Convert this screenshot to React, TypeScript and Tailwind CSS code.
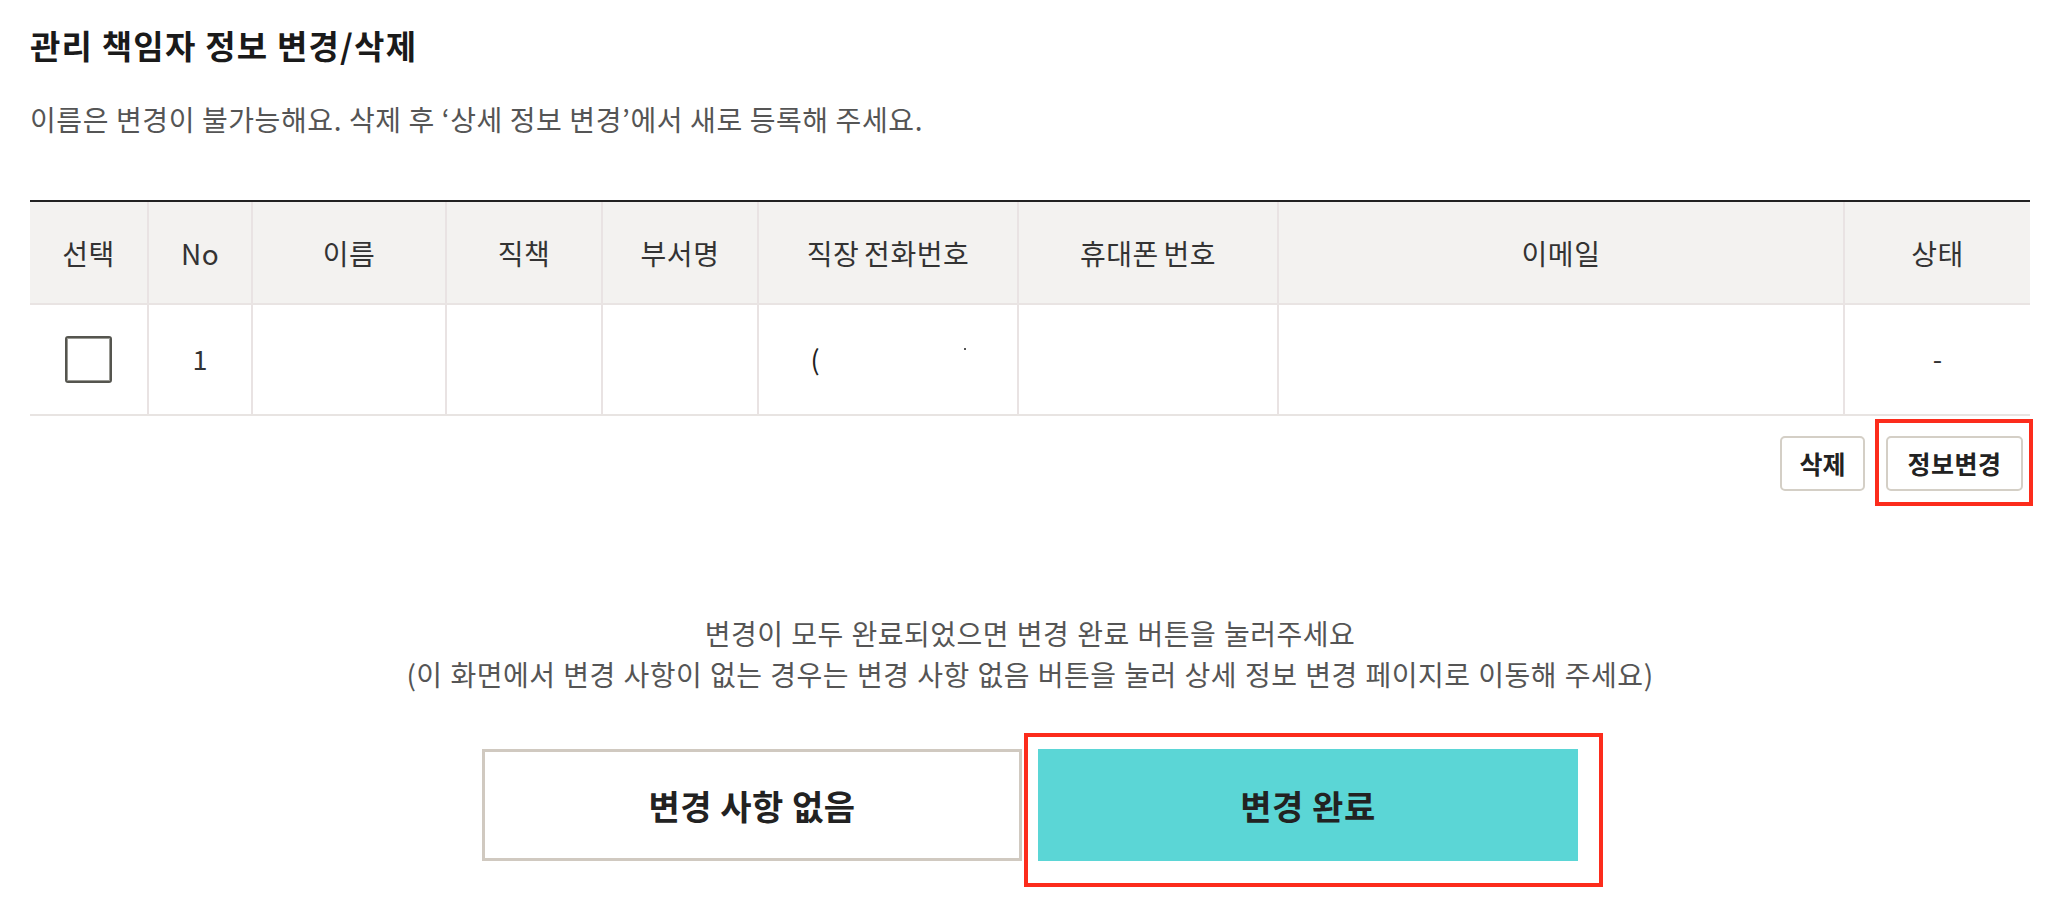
import React from "react"

const cols = "grid-cols-[117px_104px_194px_156px_156px_260px_260px_566px_187px]"

const headers = ["선택", "No", "이름", "직책", "부서명", "직장 전화번호", "휴대폰 번호", "이메일", "상태"]

function ManagerTable() {
  return (
    <div className="w-[2000px]">
      {/* header */}
      <div className={`grid ${cols} h-[105px] border-t-2 border-b-2 border-t-[#222] border-b-[#e9e4e3] bg-[#f3f2f0]`}>
        {headers.map((h, i) => (
          <div
            key={h}
            className={`flex items-center justify-center text-[28px] tracking-[0.5px] [word-spacing:-2px] text-[#333] ${i > 0 ? "border-l-2 border-[#e9e3e3]" : ""}`}
          >
            {h}
          </div>
        ))}
      </div>

      {/* row */}
      <div className={`grid ${cols} h-[111px] border-b-2 border-[#e8e4e2] bg-white text-[27px] text-[#333]`}>
        <div className="flex items-center justify-center">
          <div className="h-[47px] w-[47px] rounded-[3px] border-2 border-[#55554f] bg-white shadow-[inset_0_0_0_1px_#9a9a94]" />
        </div>
        <div className="flex items-center justify-center border-l-2 border-[#e9e3e3]">1</div>
        <div className="border-l-2 border-[#e9e3e3]" />
        <div className="border-l-2 border-[#e9e3e3]" />
        <div className="border-l-2 border-[#e9e3e3]" />
        <div className="flex items-center justify-center border-l-2 border-[#e9e3e3]">
          <span className="text-[#222]">(</span>
          <span className="relative h-[30px] w-[146px]">
            <span className="absolute right-0 top-[3px] h-[2px] w-[2px] bg-[#555]" />
          </span>
        </div>
        <div className="border-l-2 border-[#e9e3e3]" />
        <div className="border-l-2 border-[#e9e3e3]" />
        <div className="flex items-center justify-center border-l-2 border-[#e9e3e3]">-</div>
      </div>
    </div>
  )
}

export default function App() {
  return (
    <div
      className="min-h-[910px] bg-white px-[30px] pt-[23px]"
      style={{ fontFamily: '"Noto Sans CJK KR", "Noto Sans", sans-serif' }}
    >
      <div className="w-[2000px]">
        <h1 className="text-[33px] font-semibold leading-[44px] tracking-[1.2px] text-[#1a1a1a]">
          관리 책임자 정보 변경/삭제
        </h1>
        <p className="mt-[32px] text-[28px] leading-[40px] tracking-[0.6px] text-[#555]">
          이름은 변경이 불가능해요. 삭제 후 ‘상세 정보 변경’에서 새로 등록해 주세요.
        </p>

        <div className="mt-[61px]">
          <ManagerTable />
        </div>

        <div className="mt-[20px] flex justify-end gap-[21px] pr-[7px]">
          <button className="h-[55px] w-[85px] rounded-[5px] border-2 border-[#d4cfc6] bg-white text-[25px] font-semibold text-[#222]">
            삭제
          </button>
          <div className="relative">
            <button className="h-[55px] w-[137px] rounded-[5px] border-2 border-[#d4cfc6] bg-white text-[25px] font-semibold tracking-[0.5px] text-[#222]">
              정보변경
            </button>
            <div className="pointer-events-none absolute -bottom-[15px] -left-[11px] -right-[10px] -top-[17px] border-4 border-[#fc2c1c]" />
          </div>
        </div>

        <div className="mt-[122px] text-center text-[28px] leading-[41px] tracking-[0.5px] [word-spacing:1px] text-[#555]">
          <p>변경이 모두 완료되었으면 변경 완료 버튼을 눌러주세요</p>
          <p>(이 화면에서 변경 사항이 없는 경우는 변경 사항 없음 버튼을 눌러 상세 정보 변경 페이지로 이동해 주세요)</p>
        </div>

        <div className="mt-[54px] flex justify-center gap-[16px]">
          <button className="h-[112px] w-[540px] border-[3px] border-[#d0c9c0] bg-white text-[34px] font-semibold tracking-[0.5px] text-[#222]">
            변경 사항 없음
          </button>
          <div className="relative">
            <button className="h-[112px] w-[540px] bg-[#5bd6d6] text-[34px] font-semibold tracking-[0.5px] text-[#222]">
              변경 완료
            </button>
            <div className="pointer-events-none absolute -bottom-[26px] -left-[14px] -right-[25px] -top-[16px] border-4 border-[#fc2c1c]" />
          </div>
        </div>
      </div>
    </div>
  )
}
